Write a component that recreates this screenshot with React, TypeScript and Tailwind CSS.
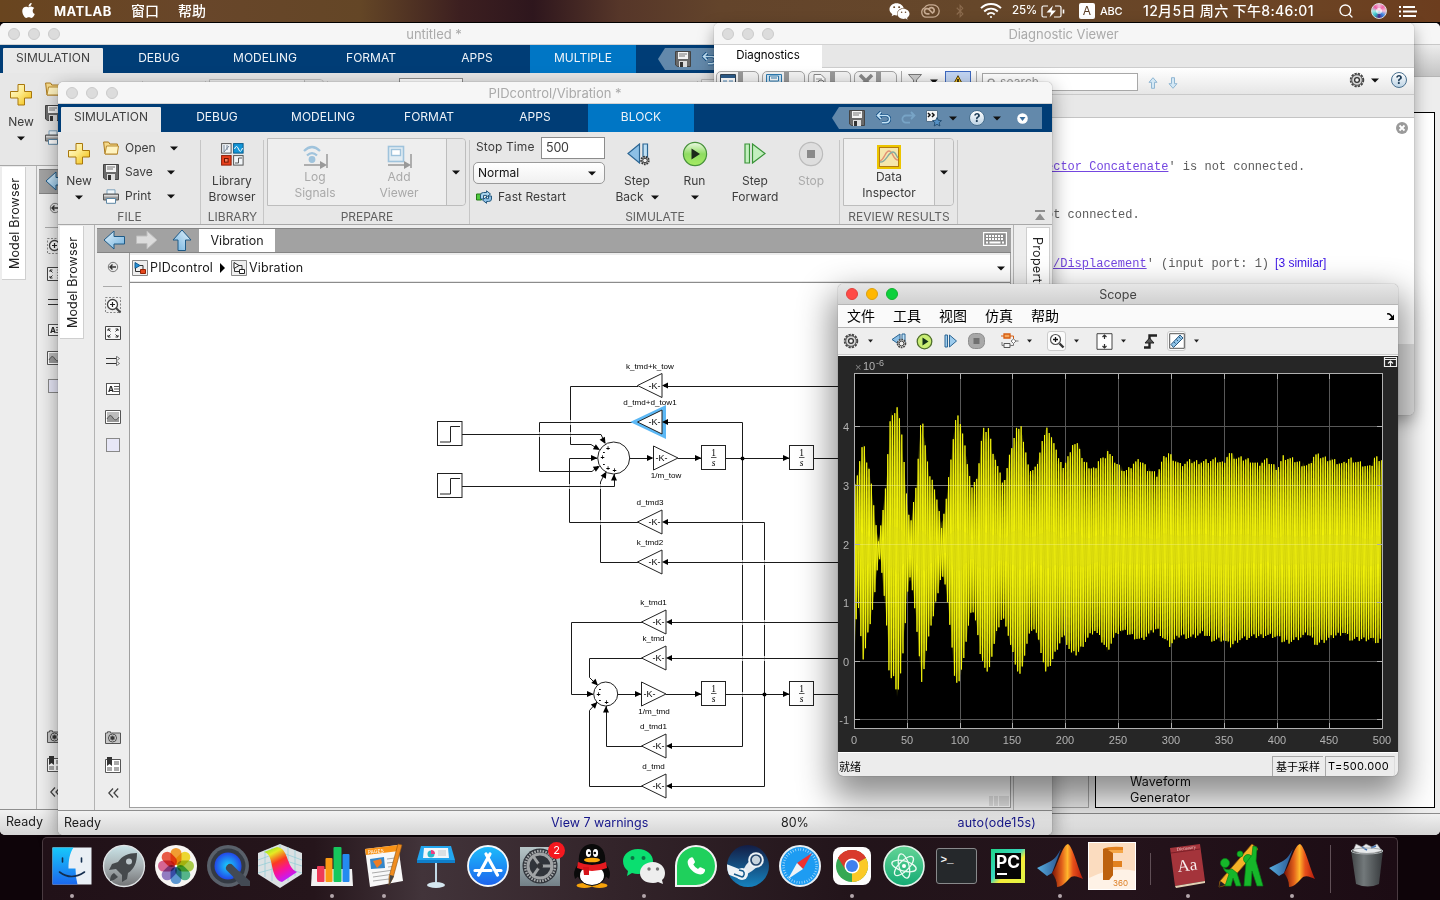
import React from "react";
import { FaApple, FaWeixin, FaBluetoothB, FaPhoneAlt } from "react-icons/fa";
import { Search } from "lucide-react";

type Kids = { children?: React.ReactNode };

/* ---------- shared bits ---------- */

const Caret = ({ className = "" }: { className?: string }) => (
  <svg className={"shrink-0 " + className} width="8" height="5" viewBox="0 0 8 5">
    <path d="M0 .4h8L4 4.6z" fill="#111" />
  </svg>
);

const TitleBar = ({ title, offset }: { title: string; offset: string }) => (
  <div className="flex h-[22px] shrink-0 items-center border-b border-[#d2d2d2] bg-[#f6f6f6]">
    <div className="flex w-[60px] shrink-0 gap-2 pl-2">
      <i className="h-3 w-3 shrink-0 rounded-full border border-[#cacaca] bg-[#dcdcdc]" />
      <i className="h-3 w-3 shrink-0 rounded-full border border-[#cacaca] bg-[#dcdcdc]" />
      <i className="h-3 w-3 shrink-0 rounded-full border border-[#cacaca] bg-[#dcdcdc]" />
    </div>
    <div className={"flex-1 pt-[2px] text-center text-[13px] tracking-[-0.05px] whitespace-nowrap text-[#aaa] " + offset}>{title}</div>
  </div>
);

const FloppyIcon = () => (
  <svg width="16" height="16" viewBox="0 0 16 16" className="shrink-0">
    <path d="M.5.5h15v15H2.5L.5 14z" fill="#6a6a6a" stroke="#444" />
    <path d="M3 1h10v7H3z" fill="#f4f4f4" />
    <path d="M4 3h8M4 5h6" stroke="#777" />
    <path d="M4 10h8v6H4z" fill="#ddd" />
    <path d="M5 11h3v5H5z" fill="#333" />
  </svg>
);

const FolderIcon = () => (
  <svg width="16" height="14" viewBox="0 0 16 14" className="shrink-0">
    <path d="M.6 1h5l1.200 2h7.600v10H2z" fill="#f5d98a" stroke="#a9781c" />
    <path d="M3.500 5h12l-1.200 8H2z" fill="#fff3c0" stroke="#b98b30" />
  </svg>
);

const PrinterIcon = () => (
  <svg width="16" height="15" viewBox="0 0 16 15" className="shrink-0">
    <path d="M4 .8h8V6H4z" fill="#eef6fb" stroke="#7fa3bd" />
    <path d="M.5 5h15v6H.5z" fill="#9a9a9a" stroke="#555" />
    <path d="M1 6h14v1.500H1z" fill="#d8d8d8" />
    <path d="M3.500 9.500h9v4.800h-9z" fill="#fff" stroke="#5c86a4" />
  </svg>
);

const HelpIcon = () => (
  <span className="flex h-4 w-4 shrink-0 items-center justify-center rounded-full border border-[#49708f] bg-linear-to-b from-white to-[#bdd3e4] text-[12px] leading-none font-bold text-[#1b3a55]">?</span>
);

const GearIcon = () => (
  <svg width="16" height="16" viewBox="0 0 16 16" className="shrink-0">
    <circle cx="8" cy="8" r="6.300" fill="none" stroke="#444" strokeWidth="1.900" strokeDasharray="2.300 1" />
    <circle cx="8" cy="8" r="5.300" fill="#d4d4d4" stroke="#555" />
    <circle cx="8" cy="8" r="2.400" fill="#f4f4f4" stroke="#333" strokeWidth="1.300" />
  </svg>
);

/* ---------- ribbon ---------- */

const Ribbon = ({ last, quick }: { last: string; quick: string }) => (
  <div className="flex h-7 shrink-0 bg-[#003d76] text-[12px] text-[#eef3f8]">
    <div className="mt-[3px] ml-[3px] flex h-[25px] w-[100px] shrink-0 items-center justify-center rounded-t-[1px] bg-[#e9e9e9] pb-[5px] text-[#404040]">SIMULATION</div>
    <div className="ml-[3px] flex shrink-0">
      {["DEBUG", "MODELING", "FORMAT", "APPS"].map((t) => (
        <div key={t} className="flex w-[106px] items-center justify-center pb-[2px]">{t}</div>
      ))}
      <div className="flex w-[106px] items-center justify-center bg-[#0076c5] pb-[2px]">{last}</div>
    </div>
    <div className={"mt-[3px] flex h-[22px] w-[210px] shrink-0 items-center bg-[#6389ab] pl-[17px] [clip-path:polygon(7px_0,100%_0,100%_100%,7px_100%,0_50%)] " + quick}>
      <FloppyIcon />
      <svg className="ml-[11px] shrink-0" width="15" height="14" viewBox="0 0 15 14">
        <path d="M5 1 1.500 4.500 5 8M2 4.500h8a3.400 3.400 0 0 1 0 7.200H6" fill="none" stroke="#0d4a80" strokeWidth="3.200" />
        <path d="M5 1 1.500 4.500 5 8M2 4.500h8a3.400 3.400 0 0 1 0 7.200H6" fill="none" stroke="#c3e2f6" strokeWidth="1.700" />
      </svg>
      <svg className="ml-[10px] shrink-0 opacity-60" width="15" height="14" viewBox="0 0 15 14">
        <path d="M10 1 13.500 4.500 10 8M13 4.500H5a3.400 3.400 0 0 0 0 7.200h4" fill="none" stroke="#86b6d9" strokeWidth="1.800" />
      </svg>
      <svg className="ml-[10px] shrink-0" width="16" height="17" viewBox="0 0 16 17">
        <path d="M.5.5h11v11H.5z" fill="#f4f6f8" stroke="#54718b" />
        <path d="m2 3 2 2-2 2M6 3l2 2-2 2" fill="none" stroke="#111" strokeWidth="1.500" />
        <path d="m11 7.500 1.300 2.800 3.200.3-2.400 2.100.8 3.300-2.900-1.700-2.800 1.700.7-3.300-2.400-2.100 3.200-.3z" fill="#5590c4" stroke="#1c4568" strokeWidth=".8" />
      </svg>
      <Caret className="ml-[7px]" />
      <span className="ml-3"><HelpIcon /></span>
      <Caret className="ml-2" />
      <svg className="ml-4 shrink-0" width="11" height="11" viewBox="0 0 11 11">
        <circle cx="5.500" cy="5.500" r="5.300" fill="#fff" />
        <path d="M2.500 4h6l-3 4z" fill="#3b6f9e" />
      </svg>
    </div>
  </div>
);

const Group = ({ label, width, children }: Kids & { label: string; width: string }) => (
  <div className={"relative flex h-[92px] shrink-0 flex-col " + width}>
    <div className="flex h-[77px]">{children}</div>
    <div className="flex h-[15px] items-center justify-center text-[12px] whitespace-nowrap text-[#606060]">{label}</div>
    <div className="absolute top-2 right-0 h-[84px] w-px bg-[#c6c6c6]" />
  </div>
);

const BigButton = ({ icon, lines, width, dim, caret }: { icon: React.ReactNode; lines: string[]; width: string; dim?: boolean; caret?: boolean }) => (
  <div className={"flex shrink-0 flex-col items-center pt-[9px] " + width + (dim ? " text-[#aaa]" : "")}>
    <div className="flex h-[26px] items-center justify-center">{icon}</div>
    <div className="mt-[6px] text-center leading-4 whitespace-nowrap">
      {lines.map((l, i) => (
        <div key={l} className="flex h-4 items-center justify-center gap-[7px]">
          {l}
          {caret && i === 1 ? <Caret /> : null}
        </div>
      ))}
    </div>
    {caret && lines.length === 1 ? <Caret className="mt-[6px]" /> : null}
  </div>
);

const BoxItem = ({ icon, lines, width, dim }: { icon: React.ReactNode; lines: string[]; width: string; dim?: boolean }) => (
  <div className={"flex shrink-0 flex-col items-center pt-[5px] " + width + (dim ? " text-[#a9a9a9]" : "")}>
    <div className="flex h-[25px] items-center">{icon}</div>
    {lines.map((l) => (
      <div key={l} className="h-4 leading-4">{l}</div>
    ))}
  </div>
);

const LogIcon = () => (
  <svg width="25" height="24" viewBox="0 0 25 24">
    <g fill="none" stroke="#9fc3dc" strokeWidth="2.200">
      <path d="M1 6q8-8 16 0M4 10.500q5-5 10 0" />
    </g>
    <circle cx="9" cy="14.500" r="3.400" fill="#9fc3dc" />
    <path d="M1 20h20M24 9v14" stroke="#999" strokeWidth="1.500" />
    <path d="m17 16 7 4-7 4z" fill="#999" />
  </svg>
);

const ViewerIcon = () => (
  <svg width="25" height="24" viewBox="0 0 25 24">
    <rect x="1.500" y="1.500" width="15" height="15" fill="#e3edf3" stroke="#9fc3dc" strokeWidth="1.600" />
    <rect x="4.500" y="4.500" width="9" height="6" fill="#fff" stroke="#9fc3dc" strokeWidth="1.400" />
    <path d="M1 20h20M24 9v14" stroke="#999" strokeWidth="1.500" />
    <path d="m17 16 7 4-7 4z" fill="#999" />
  </svg>
);

const StepBackIcon = () => (
  <svg width="24" height="24" viewBox="0 0 24 24" className="ml-[3px]">
    <path d="M12.500 2v19L1 11.500z" fill="#8dc0e6" stroke="#2b6593" strokeWidth="1.200" />
    <path d="M16 2h4.500v15H16z" fill="#bfe0f5" stroke="#2b6593" strokeWidth="1.200" />
    <circle cx="18" cy="18.500" r="3.800" fill="#ddd" stroke="#333" strokeWidth="1.800" strokeDasharray="1.700 .9" />
    <circle cx="18" cy="18.500" r="2.300" fill="#eee" stroke="#333" />
  </svg>
);

const PlusIcon = () => (
  <svg width="24" height="24" viewBox="0 0 24 24">
    <defs>
      <linearGradient id="plusFill" x1="0" y1="0" x2="1" y2="1">
        <stop offset="0" stopColor="#fffbe0" />
        <stop offset=".45" stopColor="#fdea8a" />
        <stop offset="1" stopColor="#efb800" />
      </linearGradient>
    </defs>
    <path d="M9 1.500h6.500v7H22.500V15h-7v7H9v-7H1.500V8.500H9z" fill="url(#plusFill)" stroke="#a8770c" />
  </svg>
);

const Toolstrip = ({ compact }: { compact?: boolean }) => (
  <div className="flex h-[93px] shrink-0 border-b border-[#a8a8a8] bg-[#e7e7e7] text-[12px] text-[#3c3c3c]">
    <Group label="FILE" width="w-[143px]">
      <BigButton icon={<PlusIcon />} lines={["New"]} width="w-[42px]" caret />
      <div className="flex flex-col pt-1 pl-[3px]">
        {[
          ["Open", <FolderIcon key="a" />, "ml-[15px]"],
          ["Save", <FloppyIcon key="b" />, "ml-3"],
          ["Print", <PrinterIcon key="c" />, "ml-3"],
        ].map(([t, icon, gap]) => (
          <div key={t as string} className="flex h-6 items-center">
            {icon}
            <span className="w-9 pl-[6px]">{t}</span>
            <Caret className={"mt-px " + (gap as string)} />
          </div>
        ))}
      </div>
    </Group>
    <Group label="LIBRARY" width="w-[63px]">
      <BigButton
        width="w-[62px]"
        lines={["Library", "Browser"]}
        icon={
          <svg width="23" height="23" viewBox="0 0 23 23">
            <rect x=".6" y=".6" width="9.500" height="9.500" fill="#f1f5f8" stroke="#555" />
            <path d="M3 2v7l5-6M6 2v5" stroke="#78889a" fill="none" />
            <rect x="12.600" y=".6" width="9.500" height="9.500" fill="#1296d8" stroke="#0a5c8c" />
            <path d="M13.500 6q2-5 4 0t4-1" stroke="#fff" fill="none" />
            <rect x=".6" y="12.600" width="9.500" height="9.500" fill="#e8401c" stroke="#8e1d06" />
            <rect x="3.500" y="15.500" width="3.600" height="3.600" fill="#f87c5b" stroke="#6e1400" />
            <rect x="12.600" y="12.600" width="9.500" height="9.500" fill="#f1f5f8" stroke="#555" />
            <path d="M14 20h3.500v-5H21" stroke="#555" fill="none" />
          </svg>
        }
      />
    </Group>
    <Group label="PREPARE" width={compact ? "w-[122px]" : "w-[206px]"}>
      <div className="mt-[6px] ml-[3px] flex h-[68px] rounded-r-[4px] border border-[#bdbdbd] bg-[#eeeeee]">
        <BoxItem icon={<LogIcon />} lines={["Log", "Signals"]} width="w-[94px]" dim />
        {!compact && <BoxItem icon={<ViewerIcon />} lines={["Add", "Viewer"]} width="w-[84px] pr-[10px]" dim />}
        <div className="flex w-[19px] items-center justify-center rounded-r-[4px] border-l border-[#bdbdbd] bg-[#e7e7e7]"><Caret /></div>
      </div>
    </Group>
    <Group label="SIMULATE" width="w-[370px]">
      <div className="flex w-[135px] flex-col pt-[5px] pl-[3px]">
        <div className="flex h-[22px] items-center">
          <span className="w-[68px] pb-[3px] pl-[3px] tracking-[0.1px]">Stop Time</span>
          <span className="flex h-[22px] w-16 items-center border border-[#8c8c8c] bg-white pt-px pl-1 text-[12.500px] tracking-[-.2px]">500</span>
        </div>
        <div className="mt-[3px] flex h-[22px] w-[132px] items-center justify-between rounded-[5px] border border-[#9a9a9a] bg-linear-to-b from-white to-[#f0f0f0] pr-2 pl-1 text-[12px] text-[#111]">Normal<Caret /></div>
        <div className="mt-[2px] flex h-[22px] items-center pl-[3px]">
          <svg width="16" height="14" viewBox="0 0 16 14">
            <path d="M.5 4h5v6h-5z" fill="#4fc93f" stroke="#237a17" />
            <path d="M4.500 9V5q0-2.500 3-2.500h3V.8L14.500 4l-4 3V5.400h-3V9z" fill="#a9d4ee" stroke="#25597e" />
            <path d="M15.500 6v3q0 2.500-3 2.500h-2v1.800L6.500 10l4-3v1.700h2V6z" fill="#8dc0e6" stroke="#25597e" />
          </svg>
          <span className="pl-[6px] tracking-[0.05px]">Fast Restart</span>
        </div>
      </div>
      <BigButton width="w-[64px]" lines={["Step", "Back"]} icon={<StepBackIcon />} caret />
      <BigButton
        width="w-[51px]"
        lines={["Run"]}
        caret
        icon={
          <svg width="26" height="26" viewBox="0 0 26 26">
            <defs>
              <linearGradient id="runFill" x1="0" y1="0" x2="0" y2="1">
                <stop offset="0" stopColor="#eefae6" />
                <stop offset=".5" stopColor="#8fdc62" />
                <stop offset="1" stopColor="#a6ec62" />
              </linearGradient>
            </defs>
            <circle cx="13" cy="13" r="11.600" fill="url(#runFill)" stroke="#47913a" strokeWidth="1.200" />
            <path d="m9.500 7.500 8.500 5.500-8.500 5.500z" fill="#1c2a1a" />
          </svg>
        }
      />
      <BigButton
        width="w-[70px]"
        lines={["Step", "Forward"]}
        icon={
          <svg width="24" height="24" viewBox="0 0 24 24">
            <path d="M2 2h4.500v19H2zM9.500 2v19L22 11.500z" fill="#c3efbf" stroke="#3a9438" strokeWidth="1.200" />
          </svg>
        }
      />
      <BigButton
        width="w-[42px]"
        lines={["Stop"]}
        dim
        icon={
          <svg width="26" height="26" viewBox="0 0 26 26">
            <circle cx="13" cy="13" r="11.600" fill="#dedede" stroke="#bbb" strokeWidth="1.200" />
            <path d="M9 9h8v8H9z" fill="#8a8a8a" />
          </svg>
        }
      />
    </Group>
    <Group label="REVIEW RESULTS" width="w-[118px]">
      <div className="mt-[6px] ml-[3px] flex h-[68px] rounded-r-[4px] border border-[#bdbdbd] bg-[#f0f0f0]">
        <BoxItem
          width="w-[90px]"
          lines={["Data", "Inspector"]}
          icon={
            <svg width="24" height="24" viewBox="0 0 24 24">
              <rect x="1" y="1" width="22" height="22" fill="#f6e7ac" stroke="#ecc500" strokeWidth="2" />
              <rect x="2.500" y="2.500" width="19" height="19" fill="none" stroke="#b47b12" />
              <path d="M3 16C8 14 8 6 12 6s4 9 9 9" fill="none" stroke="#e29274" strokeWidth="1.400" />
              <path d="M3 17c6 1 8-10 13-10 3 0 3 4 5 6" fill="none" stroke="#88aba0" strokeWidth="1.400" />
            </svg>
          }
        />
        <div className="flex w-[19px] items-center justify-center rounded-r-[4px] border-l border-[#bdbdbd] bg-[#e7e7e7]"><Caret /></div>
      </div>
    </Group>
    <div className="flex flex-1 items-end justify-end pr-[7px] pb-1">
      <svg width="10" height="10" viewBox="0 0 10 10"><path d="M0 0h10v2H0zM5 3.500 10 10H0z" fill="#8e8e8e" /></svg>
    </div>
  </div>
);

/* ---------- tool palette beside the canvas ---------- */

const Cell = ({ children }: Kids) => <div className="flex h-7 w-full shrink-0 items-center justify-center pl-[2px]">{children}</div>;

const Palette = () => (
  <div className="flex w-[34px] shrink-0 flex-col items-center pb-[3px]">
    <Cell>
      <svg width="12" height="12" viewBox="0 0 12 12"><circle cx="6" cy="6" r="4.700" fill="#e8e8e8" stroke="#777" /><path d="M5.500 3.500 3 6l2.500 2.500M3 6h6" fill="none" stroke="#333" strokeWidth="1.400" /></svg>
    </Cell>
    <div className="flex h-[10px] items-center"><i className="h-px w-[19px] bg-[#aaa]" /></div>
    <Cell>
      <svg width="18" height="18" viewBox="0 0 18 18"><path d="M1.500 1.500h15v15h-15z" fill="none" stroke="#888" strokeDasharray="2 1.500" /><circle cx="8.500" cy="8.500" r="5" fill="#fff" stroke="#444" strokeWidth="1.300" /><path d="M6 8.500h5M8.500 6v5" stroke="#222" strokeWidth="1.200" /><path d="m12 12 4.500 4.500" stroke="#444" strokeWidth="2" /></svg>
    </Cell>
    <Cell>
      <svg width="16" height="14" viewBox="0 0 16 14" className="overflow-visible"><path d="M.5.5h15v13H.5z" fill="#f8f8f8" stroke="#444" /><path d="M3 5V3h2.500M3 3l2.500 2.500M13 5V3h-2.500M13 3l-2.500 2.500M3 9v2h2.500M3 11l2.500-2.500M13 9v2h-2.500M13 11l-2.500-2.500" fill="none" stroke="#333" /></svg>
    </Cell>
    <Cell>
      <svg width="14" height="10" viewBox="0 0 14 10"><path d="M0 2.500h11M0 7.500h11" stroke="#333" strokeWidth="1.100" /><path d="m10.500.300 3 2.200-3 2.200zM10.500 5.300l3 2.200-3 2.200z" fill="#fff" stroke="#555" strokeWidth=".8" /></svg>
    </Cell>
    <Cell>
      <span className="flex h-3 w-[14px] items-center border border-[#555] bg-white text-[8px] leading-none font-bold text-[#222]">
        <span className="pl-px">A</span>
        <svg width="5" height="8" viewBox="0 0 5 8"><path d="M0 1.500h5M0 4h5M0 6.500h5" stroke="#555" /></svg>
      </span>
    </Cell>
    <Cell>
      <svg width="16" height="14" viewBox="0 0 16 14"><path d="M.5.5h15v13H.5z" fill="#fff" stroke="#555" /><path d="M2 2h12v10H2z" fill="#bdbdbd" /><path d="M2 9c3-5 4-4 6-1s4 2 6-1v5H2z" fill="#999" /><path d="M2 9c3-5 4-4 6-1s4 2 6-1" fill="none" stroke="#555" /></svg>
    </Cell>
    <Cell><i className="h-[14px] w-[14px] border border-[#888] bg-[#e7e7f7]" /></Cell>
    <div className="flex-1" />
    <Cell>
      <svg width="16" height="13" viewBox="0 0 16 13"><path d="M.5 2h2V.8h3V2h10v10.500H.5z" fill="#c4c4c4" stroke="#555" /><circle cx="7.500" cy="7" r="4" fill="#ddd" stroke="#444" /><circle cx="7.500" cy="7" r="2.200" fill="#333" stroke="#777" /></svg>
    </Cell>
    <Cell>
      <svg width="16" height="16" viewBox="0 0 16 16"><path d="M.5 2.500h15v13H.5z" fill="#fff" stroke="#555" /><path d="M9 4h5v4H9zM9 10h5v4H9zM2 10h5v4H2z" fill="#aaa" /><path d="M2 0h5v9L4.500 7 2 9z" fill="#333" /></svg>
    </Cell>
    <Cell>
      <svg width="11" height="10" viewBox="0 0 11 10"><path d="M5 .5.8 5 5 9.500M10.200.5 6 5l4.200 4.500" fill="none" stroke="#444" strokeWidth="1.300" /></svg>
    </Cell>
  </div>
);

/* ---------- block diagram ---------- */

const GainLeft = ({ x, y, label, lx, sel }: { x: number; y: number; label: string; lx: number; sel?: boolean }) => (
  <g>
    {sel && <path d={`M${x + 1.5} ${y - 13}v26L${x - 26} ${y}z`} fill="none" stroke="#5cb8f5" strokeWidth="5" />}
    <path d={`M${x} ${y - 12}v24L${x - 24.500} ${y}z`} fill="#fff" stroke="#222" />
    <text x={x - 7.500} y={y + 3.300} fontSize="9" textAnchor="middle">-K-</text>
    <path d={`M${x} ${y}l6-3v6z`} fill="#000" />
    <text x={lx} y={y - 17} fontSize="8.100" textAnchor="middle">{label}</text>
  </g>
);

const GainRight = ({ x, y, label }: { x: number; y: number; label: string }) => (
  <g>
    <path d={`M${x} ${y - 12}v24L${x + 24.500} ${y}z`} fill="#fff" stroke="#222" />
    <text x={x + 8} y={y + 3.300} fontSize="9" textAnchor="middle">-K-</text>
    <text x={x + 12.500} y={y + 20} fontSize="8.100" textAnchor="middle">{label}</text>
  </g>
);

const Integrator = ({ x, y }: { x: number; y: number }) => (
  <g>
    <rect x={x} y={y} width="24" height="24" fill="#fff" stroke="#222" />
    <g fontFamily="'Liberation Serif', serif" fontSize="9.500" textAnchor="middle">
      <text x={x + 12} y={y + 10}>1</text>
      <text x={x + 12} y={y + 20} fontStyle="italic">s</text>
    </g>
    <path d={`M${x + 9.500} ${y + 12}h5.500`} stroke="#333" strokeWidth=".8" />
  </g>
);

const Head = ({ x, y, a = 0 }: { x: number; y: number; a?: number }) => (
  <path d="M0 0-6.500-3V3z" transform={`translate(${x} ${y}) rotate(${a})`} fill="#000" />
);

/* points where one signal line passes over another and leaves a small gap */
const crossings: [number, number][] = [[570.5, 422.5], [570.5, 434.5], [539.5, 434.5], [569.5, 486.5], [600.5, 486.5], [600.5, 522.5], [742.5, 522.5], [742.5, 562.5], [764.5, 562.5], [742.5, 622.5], [764.5, 622.5], [742.5, 658.5], [764.5, 658.5], [742.5, 694.5]];

const Diagram = () => (
  <svg className="block" width="880" height="524" viewBox="130 283 880 524" fontFamily="'Liberation Sans', Arial, sans-serif">
    <g fill="none" stroke="#1a1a1a" strokeWidth="1">
      <path d="M840 386.500H664M638 386.500H570.500V444.500H591L598 449" />
      <path d="M638 422.500H539.500V471.500H592L598 466" />
      <path d="M462 434.500H601L605 443M462 486.500H614.500V474" />
      <path d="M638 522.500H569.500V458.500H597M638 562.500H600.500V482L605 473" />
      <path d="M630 458.500H652M678 458.500H701M726 458.500H789M814 458.500H840" />
      <path d="M664 422.500H742.500V746.500H668M664 522.500H764.500V786.500H668M664 562.500H840" />
      <path d="M840 622.500H668M642 622.500H571.500V694.500H593M840 658.500H668M642 658.500H589.500V677.500L597 685" />
      <path d="M618 694.500H641M666 694.500H701M726 694.500H789M814 694.500H840" />
      <path d="M642 746.500H606.500V706M642 786.500H589.500V710.500L597 702" />
    </g>
    <g stroke="#fff" strokeWidth="2" opacity=".7">
      {crossings.map(([x, y]) => <path key={`${x}-${y}`} d={`M${x} ${y - 2.5}v2M${x} ${y + 0.5}v2`} />)}
    </g>
    <GainLeft x={662} y={385.500} label="k_tmd+k_tow" lx={650} />
    <GainLeft x={662} y={422} label="d_tmd+d_tow1" lx={650} sel />
    <GainLeft x={662} y={522} label="d_tmd3" lx={650} />
    <GainLeft x={662} y={562} label="k_tmd2" lx={650} />
    <GainLeft x={666} y={622} label="k_tmd1" lx={653.500} />
    <GainLeft x={666} y={658} label="k_tmd" lx={653.500} />
    <GainLeft x={666} y={746} label="d_tmd1" lx={653.500} />
    <GainLeft x={666} y={786} label="d_tmd" lx={653.500} />
    <GainRight x={653.500} y={458} label="1/m_tow" />
    <GainRight x={641.500} y={694} label="1/m_tmd" />
    <Integrator x={701.500} y={445.500} />
    <Integrator x={789.500} y={445.500} />
    <Integrator x={701.500} y={681.500} />
    <Integrator x={789.500} y={681.500} />
    {[421.500, 473.500].map((y) => (
      <g key={y} fill="none" stroke="#222">
        <rect x="437.500" y={y} width="24.500" height="24" fill="#fff" />
        <path d={`M440 ${y + 20.500}h10.500v-15.500h9.500`} />
      </g>
    ))}
    <circle cx="613.700" cy="458" r="16" fill="#fff" stroke="#222" />
    <circle cx="605.700" cy="694" r="12" fill="#fff" stroke="#222" />
    <g fontSize="7" fontWeight="bold" textAnchor="middle">
      <text x="608" y="450.500">+</text>
      <text x="604" y="454">-</text>
      <text x="602.500" y="460">+</text>
      <text x="604" y="466">-</text>
      <text x="608" y="470.500">+</text>
      <text x="614.500" y="473">+</text>
      <text x="600" y="690.500">-</text>
      <text x="598.500" y="696.500">+</text>
      <text x="600" y="702">-</text>
      <text x="606.500" y="705">+</text>
    </g>
    <Head x={605.500} y={444} a={60} />
    <Head x={600} y={450} a={30} />
    <Head x={597.500} y={458} />
    <Head x={600} y={466} a={-30} />
    <Head x={606.500} y={471.500} a={-60} />
    <Head x={614} y={474} a={-90} />
    <Head x={653.500} y={458} />
    <Head x={701.500} y={458} />
    <Head x={789.500} y={458} />
    <Head x={598} y={685.500} a={45} />
    <Head x={593.500} y={694} />
    <Head x={597.500} y={702} a={-45} />
    <Head x={606} y={706} a={-90} />
    <Head x={641.500} y={694} />
    <Head x={701.500} y={694} />
    <Head x={789.500} y={694} />
    <circle cx="742.500" cy="458.500" r="2" />
    <circle cx="764.500" cy="694.500" r="2" />
    <path d="M989 796h4v10h-4zM994 796h4v10h-4zM999 796h10v10h-10z" fill="#e4e4e4" />
  </svg>
);

/* ---------- Simulink editor window ---------- */

const ArrowShape = ({ rot, dim }: { rot: string; dim?: boolean }) => (
  <svg width="22" height="22" viewBox="0 0 22 22" className={"shrink-0 " + rot}>
    <defs>
      <linearGradient id="arrowBlue" x1="0" y1="0" x2="1" y2="1">
        <stop offset="0" stopColor="#e4f3fc" />
        <stop offset="1" stopColor="#6fb0dd" />
      </linearGradient>
    </defs>
    <path d="M1 11 11 2v5.500h10.500v7.500H11V20z" fill={dim ? "#dcdcdc" : "url(#arrowBlue)"} stroke={dim ? "#bdbdbd" : "#1f5a86"} />
  </svg>
);

type SimProps = Kids & { title: string; last: string; quick: string; compact?: boolean; place: string; status: React.ReactNode; statusH: string; offset: string };

const SimWindow = ({ title, last, quick, compact, place, status, statusH, offset, children }: SimProps) => (
  <div className={"absolute flex flex-col overflow-hidden rounded-[5px] bg-[#ededed] " + place}>
    <TitleBar title={title} offset={offset} />
    <Ribbon last={last} quick={quick} />
    <Toolstrip compact={compact} />
    <div className="flex min-h-0 flex-1">
      <div className="w-[37px] shrink-0 border-r border-[#b3b3b3] pt-px pl-[2px]">
        <div className="flex h-[113px] w-[24px] items-center justify-center border-r border-b border-[#cfcfcf] bg-white">
          <span className="rotate-180 pr-[3px] text-[12.500px] leading-none tracking-[.15px] whitespace-nowrap text-[#222] [writing-mode:vertical-rl]">Model Browser</span>
        </div>
      </div>
      <div className="flex min-w-0 flex-1 flex-col pt-[3px]">
        <div className="ml-[2px] flex h-[25px] shrink-0 items-center border-t border-b border-[#848484] bg-[#a2a2a2] pl-[6px]">
          <ArrowShape rot="-mt-[2px]" />
          <span className="ml-[11px]"><ArrowShape rot="-mt-[2px] rotate-180" dim /></span>
          <span className="ml-[13px]"><ArrowShape rot="-mt-[2px] rotate-90" /></span>
          <div className="ml-[6px] flex h-[23px] w-[76px] items-center justify-center bg-white pt-px text-[12.500px] text-[#1a1a1a]">Vibration</div>
          <svg className="mr-1 mb-[3px] ml-auto" width="24" height="14" viewBox="0 0 24 14">
            <path d="M.6.6h22.800v12.800H.6z" fill="#8d8d8d" stroke="#fff" strokeWidth="1.200" />
            <path d="M3 4h18M3 7h18" stroke="#fff" strokeWidth="1.800" strokeDasharray="2 1" />
            <path d="M3 10.500h2M6.500 10.500h11M19 10.500h2" stroke="#fff" strokeWidth="1.800" />
          </svg>
        </div>
        <div className="flex min-h-0 flex-1">
          <Palette />
          {children}
        </div>
      </div>
      <div className="ml-[2px] w-[39px] shrink-0 border-l border-[#b3b3b3] pt-[2px] pl-3">
        <div className="h-[112px] w-[24px] border border-[#cfcfcf] bg-white pt-[9px] pl-[3px]">
          <span className="text-[12.500px] leading-none tracking-[.3px] whitespace-nowrap text-[#222] [writing-mode:vertical-rl]">Property Inspector</span>
        </div>
      </div>
    </div>
    <div className={"flex shrink-0 items-center border-t border-[#8e8e8e] bg-linear-to-b from-[#f2f2f2] to-[#d5d5d5] text-[12.500px] text-[#1c1c1c] " + statusH}>{status}</div>
  </div>
);

const BlockChip = ({ color }: { color?: boolean }) => (
  <svg width="16" height="16" viewBox="0 0 16 16" className="shrink-0">
    <path d="M.5.5h15v15H.5z" fill="#eee" stroke="#888" />
    <path d="M3 2.500v6l5-3z" fill={color ? "#2390d8" : "#fff"} stroke={color ? "#125a8e" : "#222"} />
    <path d="M8 5.500h3V9M3.500 8v3.500H8" fill="none" stroke="#333" />
    <path d="M8.500 9.500h5v4h-5z" fill={color ? "#e5481e" : "#fff"} stroke={color ? "#952205" : "#222"} />
  </svg>
);

/* ---------- diagnostic viewer ---------- */

const SplitButton = ({ children }: Kids) => (
  <div className="mr-[3px] flex h-[26px] w-[43px] shrink-0 justify-between overflow-hidden rounded-[5px] border border-[#a3a3a3] bg-[#f3f3f3]">
    <div className="flex flex-1 justify-center pt-[2px]">{children}</div>
    <div className="w-[5px] bg-[#9a9a9a]" />
    <div className="w-[15px]" />
  </div>
);

const DiagnosticViewer = () => (
  <div className="absolute top-[23px] left-[714px] flex h-[392px] w-[700px] flex-col overflow-hidden rounded-[5px] bg-white shadow-[0_0_1px_rgba(0,0,0,.5),0_6px_16px_rgba(0,0,0,.35)]">
    <TitleBar title="Diagnostic Viewer" offset="pr-[61px]" />
    <div className="flex h-[23px] shrink-0 border-b border-[#cdcdcd] bg-[#e7e7e7]">
      <div className="flex h-[23px] w-[108px] items-center justify-center bg-white pb-px text-[11.500px] text-black">Diagnostics</div>
    </div>
    <div className="flex h-[27px] shrink-0 border-b border-[#c9c9c9] bg-linear-to-b from-white to-[#e6e6e6] pt-[3px] pl-[2px]">
      <SplitButton><svg width="16" height="14" viewBox="0 0 16 14"><path d="M.5.500h15v13H.5z" fill="#fff" stroke="#345" /><path d="M1 1h14v3H1z" fill="#2c5c8a" /><path d="M3 7h4M9 7h4M3 10h4" stroke="#4a86b8" /></svg></SplitButton>
      <SplitButton><svg width="16" height="14" viewBox="0 0 16 14"><path d="M.5.500h15v13H.5z" fill="#cfe7f7" stroke="#2e7ab0" /><path d="M3.500 2h9v5h-9zM5 4h6" fill="#fff" stroke="#2e7ab0" /></svg></SplitButton>
      <SplitButton><svg width="14" height="16" viewBox="0 0 14 16"><path d="M1 .5h7l4 4v11H1z" fill="#fff" stroke="#888" /><path d="M3 5h6M3 8h4" stroke="#999" /><circle cx="8" cy="9" r="3" fill="#eee" stroke="#777" /></svg></SplitButton>
      <SplitButton><svg width="16" height="14" viewBox="0 0 16 14"><path d="m2 1 12 12M14 1 2 13" stroke="#888" strokeWidth="3.500" /></svg></SplitButton>
      <i className="mr-[6px] ml-px h-5 w-px bg-[#aaa]" />
      <svg className="mt-[3px]" width="14" height="14" viewBox="0 0 14 14"><path d="M.5.5h13L8.500 6v7L5.500 11V6z" fill="#ccc" stroke="#777" /></svg>
      <Caret className="mt-[8px] ml-[8px]" />
      <div className="ml-[7px] flex h-[26px] w-[26px] justify-center border border-[#3e69c0] bg-[#c3d6f4] pt-[3px]">
        <svg width="14" height="13" viewBox="0 0 14 13"><path d="m7 .7 6.300 11.800H.7z" fill="#f5c52b" stroke="#5a4200" /><path d="M7 4v4M7 9.500v1.500" stroke="#000" strokeWidth="1.400" /></svg>
      </div>
      <i className="ml-[5px] h-5 w-px bg-[#aaa]" />
      <div className="mt-[2px] ml-[5px] flex h-[18px] w-[156px] shrink-0 items-center border border-[#a8a8a8] bg-white pl-1 text-[12px] text-[#999]">
        <Search size={9} strokeWidth={3.5} color="#999" />
        <span className="pl-1 tracking-[.1px]">search</span>
      </div>
      <svg className="mt-[6px] ml-[10px] shrink-0" width="10" height="12" viewBox="0 0 10 12"><path d="m5 .7 4 4.600H6.500v6h-3v-6H1z" fill="#d4e8f5" stroke="#8fb6d2" /></svg>
      <svg className="mt-[6px] ml-[10px] shrink-0" width="10" height="12" viewBox="0 0 10 12"><path d="m5 11.300 4-4.600H6.500v-6h-3v6H1z" fill="#d4e8f5" stroke="#8fb6d2" /></svg>
      <div className="mt-px mr-[7px] ml-auto flex h-4 items-center">
        <GearIcon />
        <Caret className="mr-3 ml-[6px]" />
        <HelpIcon />
      </div>
    </div>
    <div className="h-[23px] shrink-0 border-b border-[#c4c4c4] bg-[#e8e8e8]" />
    <div className="flex h-[226px] shrink-0 flex-col pl-[332px] font-['Liberation_Mono',monospace] text-[12px] leading-[14px] whitespace-nowrap text-[#5c5c5c]">
      <div className="flex justify-end pt-1 pr-[6px]">
        <svg width="12" height="12" viewBox="0 0 12 12"><circle cx="6" cy="6" r="6" fill="#9a9a9a" /><path d="m3.500 3.500 5 5M8.500 3.500l-5 5" stroke="#fff" strokeWidth="1.800" /></svg>
      </div>
      <div className="mt-[26px]"><span className="text-[#7446e0] underline">ector Concatenate</span>' is not connected.</div>
      <div className="mt-[34px]">ot connected.</div>
      <div className="mt-[34px] pl-[7px]">
        <span className="text-[#7446e0] underline">/Displacement</span>' (input port: 1)
        <span className="ml-[6px] font-['Liberation_Sans',sans-serif] text-[12px] text-[#3a12e6]">[3 similar]</span>
      </div>
    </div>
    <div className="flex-1 bg-[#e4e4e4]" />
  </div>
);

/* ---------- scope ---------- */

const upper = [62,275,80,160,87,118,93,180,100,205,111,295,118,370,124,430,131,380,145,240,150,135,156,30,163,50,169,35,174,25,181,62,187,130,197,295,207,375,220,265,226,185,232,80,237,62,243,115,256,230,268,260,275,300,287,378,300,290,313,150,325,45,335,68,343,112,355,200,366,270,380,220,393,85,398,100,406,78,418,150,430,195,442,243,450,238,465,150,480,85,491,73,500,150,517,218,530,205,545,130,555,80,560,80,566,115,577,125,590,190,600,200,610,180,622,132,641,137,650,185,670,205,680,208,692,175,705,180,713,150,722,170,740,195,755,210,765,212,780,190,800,182,815,205,840,225,855,180,870,160,885,178,900,195,925,185,960,185,990,180,1010,190,1025,160,1045,175,1080,180,1100,195,1120,180,1150,205,1165,172,1190,180,1230,200,1245,165,1290,180,1320,195,1335,175,1390,205,1400,172,1419,178];
const lower = [62,783,70,595,78,680,84,783,91,750,98,700,108,640,118,560,124,460,131,490,140,600,147,690,153,850,160,830,166,840,172,880,178,860,184,800,190,720,200,570,207,530,215,590,223,690,235,845,243,800,255,690,265,655,275,590,287,520,300,580,310,700,322,845,334,845,345,760,360,650,370,628,385,750,403,825,415,775,430,690,440,660,450,660,465,740,485,824,492,824,502,750,517,685,527,685,540,740,555,820,570,785,585,740,600,705,620,760,635,762,655,725,680,690,700,725,713,750,730,712,745,690,765,700,800,720,840,685,855,710,873,735,900,705,925,712,960,700,985,720,1010,718,1030,738,1050,718,1080,712,1120,705,1150,710,1165,725,1190,722,1230,700,1250,733,1290,712,1320,695,1340,720,1390,715,1410,728,1419,710];

const SX = 610 / 1568;
const sample = (table: number[], px: number) => {
  const u = (px - 830) / SX;
  for (let i = 2; i < table.length; i += 2) {
    if (u <= table[i]) {
      const f = Math.max(0, (u - table[i - 2]) / (table[i] - table[i - 2]));
      return (table[i - 1] + (table[i + 1] - table[i - 1]) * f) / 3 + 400;
    }
  }
  return table[table.length - 1] / 3 + 400;
};

const wave = (() => {
  let d = "M854.5 661";
  let up = true;
  let n = 0;
  for (let x = 855; x < 1382; x += 1.17) {
    const jitter = (((n * 37) % 11) - 5) * 0.5;
    const y = sample(up ? upper : lower, x) + jitter;
    d += `L${x.toFixed(2)} ${y.toFixed(1)}`;
    up = !up;
    n++;
  }
  return d;
})();

const envelope = (squeeze: number) => {
  const top: string[] = [];
  const bottom: string[] = [];
  for (let x = 855; x < 1382; x += 2) {
    const a = sample(upper, x);
    const b = sample(lower, x);
    const mid = (a + b) / 2;
    const wob = squeeze * (1 + (((x * 13) % 7) - 3) * 0.02);
    top.push(`${x} ${(mid + (a - mid) * wob).toFixed(1)}`);
    bottom.unshift(`${x} ${(mid + (b - mid) * wob).toFixed(1)}`);
  }
  return "M" + top.concat(bottom).join("L") + "z";
};

const layers = [0.97, 0.94, 0.86, 0.78, 0.7, 0.62, 0.54, 0.46, 0.38, 0.3, 0.22, 0.14];

const ticksX = [0, 50, 100, 150, 200, 250, 300, 350, 400, 450, 500];
const ticksY = [4, 3, 2, 1, 0, -1];
const py = (v: number) => Math.floor(661.3 - v * 58.65) + 0.5;
const px = (v: number) => Math.round(854 + v * 1.0565) + 0.5;

const ScopePlot = () => (
  <svg className="block" width="560" height="396" viewBox="838 356 560 396" fontFamily="'Liberation Sans', Arial, sans-serif">
    <rect x="838" y="356" width="560" height="396" fill="#262626" />
    <rect x="854.500" y="374" width="528" height="354.500" fill="#000" />
    <g stroke="#585858" strokeWidth="1">
      {ticksX.slice(1, -1).map((v) => <path key={v} d={`M${px(v)} 374V728`} />)}
      {ticksY.map((v) => <path key={v} d={`M855 ${py(v)}H1382`} />)}
    </g>
    {layers.map((s) => <path key={s} d={envelope(s)} fill="#d0d00c" opacity=".14" />)}
    <path d={wave} fill="none" stroke="#ffff0c" strokeWidth=".85" strokeLinejoin="bevel" />
    <path d={envelope(0.16)} fill="#d6d610" opacity=".35" />
    <g stroke="#fff" opacity=".2">
      {ticksY.slice(1, 4).map((v) => <path key={v} d={`M855 ${py(v)}H1382`} />)}
    </g>
    <g stroke="#b0b0b0" fill="none">
      <rect x="854.500" y="373.500" width="528" height="355" />
      {ticksX.map((v) => <path key={v} d={`M${px(v)} 374v5M${px(v)} 728v-5`} />)}
      {ticksY.map((v) => <path key={v} d={`M855 ${py(v)}h5M1382 ${py(v)}h-5`} />)}
    </g>
    <g fill="#b2b2b2" fontSize="11">
      {ticksX.map((v) => <text key={v} x={px(v) - 0.5} y="744" textAnchor="middle">{v}</text>)}
      {ticksY.map((v) => <text key={v} x="849" y={py(v) + 4} textAnchor="end">{v}</text>)}
      <text x="855" y="370.500" fill="#858585">×</text>
      <text x="863" y="370">10</text>
      <text x="876" y="365.500" fontSize="9">-6</text>
    </g>
    <g stroke="#eee" fill="none" strokeWidth="1.200">
      <path d="M1384.500 357.500h12v9h-12zM1384.500 359.500h12M1390.500 366v-5M1388 363.500l2.500-2.500 2.500 2.500" />
    </g>
  </svg>
);

const SmallCaret = ({ className = "" }: { className?: string }) => (
  <svg className={"shrink-0 " + className} width="5" height="4" viewBox="0 0 5 4"><path d="M0 .5h5L2.500 3.500z" fill="#222" /></svg>
);

const Scope = () => (
  <div className="absolute top-[284px] left-[838px] flex h-[492px] w-[560px] flex-col overflow-hidden rounded-[5px] bg-[#ececec] shadow-[0_0_1px_rgba(0,0,0,.6),0_16px_34px_6px_rgba(0,0,0,.45)]">
    <div className="flex h-[21px] shrink-0 items-center border-b border-[#b5b5b5] bg-linear-to-b from-[#e6e6e6] to-[#d0d0d0] pl-2">
      <div className="flex w-[52px] gap-2">
        <i className="h-3 w-3 shrink-0 rounded-full border border-[#e0443e] bg-[#ff4b47]" />
        <i className="h-3 w-3 shrink-0 rounded-full border border-[#dba010] bg-[#ffb700]" />
        <i className="h-3 w-3 shrink-0 rounded-full border border-[#14b030] bg-[#0cd03c]" />
      </div>
      <div className="flex-1 pt-[2px] pr-[60px] text-center text-[12.500px] text-[#444]">Scope</div>
    </div>
    <div className="flex h-[23px] shrink-0 items-center gap-[18px] border-b border-[#b4b4b4] bg-[#fafafa] pl-[9px] text-[14px] leading-none text-black">
      {["文件", "工具", "视图", "仿真", "帮助"].map((t) => <span key={t}>{t}</span>)}
      <svg className="mr-1 ml-auto" width="7" height="7" viewBox="0 0 7 7"><path d="M0 1q3-1 5 3" fill="none" stroke="#000" strokeWidth="1.500" /><path d="M7 1.500V7H1.500z" /></svg>
    </div>
    <div className="flex h-[27px] shrink-0 items-center border-b border-[#ccc] bg-[#eeeeee] pl-[5px]">
      <GearIcon />
      <SmallCaret className="ml-[9px]" />
      <svg className="ml-[18px] shrink-0" width="17" height="16" viewBox="0 0 17 16"><path d="M9 1v11L1 6.500z" fill="#8dc0e6" stroke="#2b6593" /><path d="M11 1h3v9h-3z" fill="#bfe0f5" stroke="#2b6593" /><circle cx="10.500" cy="10.500" r="4" fill="#ddd" stroke="#444" strokeWidth="1.600" strokeDasharray="1.700 .9" /><circle cx="10.500" cy="10.500" r="2.400" fill="#eee" stroke="#444" /></svg>
      <svg className="ml-[8px] shrink-0" width="17" height="17" viewBox="0 0 17 17"><circle cx="8.500" cy="8.500" r="7.300" fill="#c9ee74" stroke="#50702c" strokeWidth="1.300" /><path d="m6.500 4.500 6 4-6 4z" fill="#12301a" /></svg>
      <svg className="ml-[11px] shrink-0" width="13" height="14" viewBox="0 0 13 14"><path d="M1 1h2.500v12H1zM5.500 1v12l7-6z" fill="#9ccbed" stroke="#2b6593" /></svg>
      <svg className="ml-[11px] shrink-0" width="17" height="16" viewBox="0 0 17 16"><rect x=".5" y=".5" width="16" height="15" rx="6" fill="#a8a8a8" stroke="#8e8e8e" /><path d="M5.500 5h6v6h-6z" fill="#707070" /></svg>
      <svg className="ml-[16px] shrink-0" width="18" height="16" viewBox="0 0 18 16"><path d="M3 1h6v4H3z" fill="#f6a55b" stroke="#d65c11" strokeWidth="1.300" /><path d="M3 10.500h6v4H3z" fill="#f4f4f4" stroke="#555" /><path d="M0 3h3M9 3h3.500v3" fill="none" stroke="#d65c11" /><path d="m12.500 6 2.500 2-2.500 2.500L10 8z" fill="#fff" stroke="#777" /><path d="M15 8h2.500M12.500 10.500v2H9M3 12.500H1V9" fill="none" stroke="#777" /></svg>
      <SmallCaret className="ml-[8px]" />
      <div className="ml-[15px] flex h-5 w-[19px] shrink-0 items-center justify-center rounded-[3px] border border-[#ccc] bg-[#fbfbfb]">
        <svg width="16" height="16" viewBox="0 0 16 16"><circle cx="6.500" cy="6.500" r="5" fill="#fff" stroke="#555" strokeWidth="1.200" /><path d="M4 6.500h5M6.500 4v5" stroke="#111" strokeWidth="1.300" /><path d="m10.500 10.500 4 4" stroke="#333" strokeWidth="2.400" /></svg>
      </div>
      <SmallCaret className="ml-[8px]" />
      <svg className="ml-[17px] shrink-0" width="17" height="17" viewBox="0 0 17 17"><path d="M1 .7h15v15.600H1z" fill="#fff" stroke="#444" /><path d="M8.500 2v4M8.500 11v4M6.500 4l2-2 2 2M6.500 13l2 2 2-2" fill="none" stroke="#333" strokeWidth="1.200" /></svg>
      <SmallCaret className="ml-[8px]" />
      <svg className="ml-[17px] shrink-0" width="15" height="16" viewBox="0 0 15 16"><path d="M1 14.500h5.500v-12H14" fill="none" stroke="#222" strokeWidth="2.400" /><path d="m6.500 5 4.500 5H2z" fill="#555" stroke="#222" /></svg>
      <div className="ml-[9px] flex h-[20px] w-[19px] shrink-0 items-center justify-center rounded-[3px] border border-[#ccc] bg-[#fbfbfb]">
        <svg width="16" height="16" viewBox="0 0 16 16"><path d="M.7.700h14.600v14.600H.7z" fill="#fff" stroke="#555" /><path d="M2 11.500 11 2l3 3-9.500 9.500z" fill="#8fc3e8" stroke="#2a5a80" /><path d="m5 9 1.500 1.500M7.500 6.500 9 8M10 4l1.500 1.500" stroke="#2a5a80" /></svg>
      </div>
      <SmallCaret className="ml-[8px]" />
    </div>
    <div className="h-px shrink-0 bg-[#f8f8f8]" />
    <ScopePlot />
    <div className="flex flex-1 border-t border-white text-[11px] leading-none text-black">
      <div className="flex-1 self-center pt-[5px] pl-px">就绪</div>
      <div className="mt-[3px] mr-[2px] flex w-[51px] items-center justify-center border-t border-l border-[#a8a8a8] pt-[1px]">基于采样</div>
      <div className="mt-[3px] mr-[3px] flex w-[70px] items-center border-t border-l border-r border-[#a8a8a8] border-r-[#ddd] pl-[2px] tracking-[.35px]">T=500.000</div>
    </div>
  </div>
);

/* ---------- library browser behind ---------- */

const LibraryBrowser = () => (
  <div className="absolute top-[23px] left-[868px] flex h-[812px] w-[572px] flex-col overflow-hidden rounded-[5px] bg-[#ededed]">
    <div className="h-[22px] shrink-0 border-b border-[#c8c8c8] bg-[#f6f6f6]" />
    <div className="h-8 shrink-0 border-b border-[#b5b5b5] bg-linear-to-b from-[#ececec] to-[#c4c4c4]" />
    <div className="flex min-h-0 flex-1 pt-[35px] pr-[5px] pb-[5px]">
      <div className="h-full w-[221px] border-r border-b border-[#a5a5a5]" />
      <div className="ml-[6px] flex h-full flex-1 items-end border border-black bg-white pl-[34px]">
        <div className="pb-[1px] text-[12.500px] leading-4 tracking-[.1px] text-[#111]">Waveform<br />Generator</div>
      </div>
    </div>
    <div className="h-[22px] shrink-0 border-t border-[#8a8a8a] bg-linear-to-b from-[#f0f0f0] to-[#d4d4d4]" />
  </div>
);

/* ---------- menu bar ---------- */

const MenuBar = () => (
  <div className="absolute inset-x-0 top-0 flex h-[23px] items-center border-b border-black bg-[linear-gradient(90deg,#69451f_0%,#68462a_14%,#644626_25%,#3c1f20_32%,#2e161d_37%,#563629_43%,#63442b_50%,#66472a_68%,#6c4424_90%,#6c3d1e_100%)] pl-5 text-[14px] leading-none whitespace-nowrap text-white">
    <FaApple size={17} className="-mt-[2px] shrink-0" />
    <span className="ml-[17px] w-[59px] text-[13px] font-bold tracking-[0.45px]">MATLAB</span>
    <span className="ml-[18px] w-7 font-medium">窗口</span>
    <span className="ml-[19px] w-7 font-medium">帮助</span>
    <FaWeixin size={21} className="ml-[683px] shrink-0" />
    <svg className="ml-[10px] shrink-0" width="20" height="14" viewBox="0 0 20 14" fill="none" stroke="#c7ab92">
      <path d="M13 .8a6 6 0 0 1 0 12.400H6A5 5 0 0 1 4.500 3.800 6 6 0 0 1 9 .8z" strokeWidth="1.300" />
      <path d="M9.500 9.800H7a2.600 2.600 0 1 1 1.700-4.600L12.500 9a2.800 2.800 0 1 0-3.500-4" strokeWidth="1.700" />
    </svg>
    <FaBluetoothB size={14} color="#8b6b4e" className="ml-[13px] shrink-0" />
    <svg className="ml-[13px] shrink-0" width="22" height="16" viewBox="0 0 22 16" fill="none" stroke="#fff" strokeWidth="1.900">
      <path d="M1 5.200a14 14 0 0 1 20 0M4.200 8.500a9.500 9.500 0 0 1 13.600 0M7.300 11.500a5.300 5.300 0 0 1 7.400 0" />
      <circle cx="11" cy="14" r="1.100" fill="#fff" stroke="none" />
    </svg>
    <span className="ml-[10px] w-[25px] text-[11.500px] font-medium tracking-[-.2px]">25%</span>
    <svg className="ml-[4px] shrink-0" width="24" height="13" viewBox="0 0 24 13" fill="none" stroke="#fff" strokeWidth="1.200">
      <path d="M7 1H2.500Q1 1 1 2.500v8Q1 12 2.500 12H6M14 1h4.500Q20 1 20 2.500v8q0 1.500-1.500 1.500H13" />
      <path d="M22.500 4.500v4" strokeWidth="1.600" />
      <path d="M12 .500 5.500 7.500H10L8.500 12.500 15 5.500h-4.500z" fill="#fff" stroke="none" />
    </svg>
    <span className="ml-[14px] flex h-4 w-4 items-center justify-center rounded-[2px] bg-white text-[12px] text-[#5b3d24]">A</span>
    <span className="ml-[5px] w-6 text-[11px] font-medium tracking-[-.2px]">ABC</span>
    <span className="ml-[19px] w-[174px] text-[14px] font-medium tracking-[0.34px]">12月5日 周六 下午8:46:01</span>
    <Search size={16} className="ml-[21px] shrink-0" />
    <span className="ml-[17px] h-4 w-4 shrink-0 rounded-full border border-[#ddd] bg-[conic-gradient(#f5b8d8,#ef6aa8,#f8c0d8,#3b88e2,#4a2a8a,#39c0c8,#a8ece8,#ef5b9f,#f5b8d8)] p-[4px]"><i className="block h-full w-full rounded-full bg-white/70" /></span>
    <svg className="ml-[12px] shrink-0" width="18" height="11" viewBox="0 0 18 11" fill="none" stroke="#fff" strokeWidth="2"><path d="M0 1h2M4 1h12M0 5.500h2M4 5.500h14M0 10h2M4 10h13" /></svg>
  </div>
);

/* ---------- dock ---------- */

const D = ({ children, dot }: Kids & { dot?: boolean }) => (
  <div className="relative flex h-[62px] w-[52px] shrink-0 flex-col items-center pt-[4px]">
    <div className="flex h-12 w-12 items-center justify-center">{children}</div>
    {dot && <i className="mt-[4px] h-1 w-1 rounded-full bg-[#b3a6ab]" />}
  </div>
);

const V = ({ children }: Kids) => <svg width="48" height="48" viewBox="0 0 48 48" className="shrink-0">{children}</svg>;

const MatlabIcon = () => (
  <V>
    <defs>
      <linearGradient id="mtl" x1="0" y1="0" x2="1" y2="0">
        <stop offset="0" stopColor="#7a1306" /><stop offset=".32" stopColor="#e2611b" /><stop offset=".5" stopColor="#ffb52c" /><stop offset=".68" stopColor="#e7501a" /><stop offset="1" stopColor="#b31a0c" />
      </linearGradient>
      <linearGradient id="mtb" x1="0" y1="0" x2="1" y2="0"><stop offset="0" stopColor="#58aee0" /><stop offset="1" stopColor="#26508c" /></linearGradient>
    </defs>
    <path d="m1 26 14-7c4-2 7-7 10-12l-9 24-5 3z" fill="url(#mtb)" />
    <path d="M16 31C22 24 26 3 32 2c5 3 9 22 15 35-5-2-10-5-14 0-4 4-7 8-12 8 0-6-2-10-5-14z" fill="url(#mtl)" />
  </V>
);

const petals: [string, number][] = [["#f8981d", 0], ["#f3dc1c", 45], ["#a6cf3a", 90], ["#46b585", 135], ["#4d92d8", 180], ["#8d74c6", 225], ["#d9598f", 270], ["#ee4b35", 315]];

const Dock = () => (
  <div className="absolute top-[837px] left-[42px] flex h-[63px] w-[1356px] rounded-t-[5px] border border-b-0 border-[#4a3b41] bg-[linear-gradient(90deg,#211118_0%,#25151b_20%,#42343a_28%,#33242a_42%,#22141a_60%,#24131b_80%,#1c0c14_100%)] pl-[3px]">
    <D dot>
      <V>
        <defs>
          <linearGradient id="fnd" x1="0" y1="0" x2="0" y2="1"><stop offset="0" stopColor="#17c8fb" /><stop offset="1" stopColor="#1b68ee" /></linearGradient>
        </defs>
        <path d="M4.500 5.500h39v37h-39z" fill="#e9eff5" />
        <path d="M4.500 5.500h21c-4 6-5 13-5 21h7q0 8 2 16h-25z" fill="url(#fnd)" />
        <path d="M14.500 16v4M33.500 16v4M11.500 30q12 9 25 0" stroke="#132d4e" strokeWidth="1.600" fill="none" strokeLinecap="round" />
      </V>
    </D>
    <D>
      <V>
        <defs><linearGradient id="lp" x1="0" y1="0" x2="0" y2="1"><stop offset="0" stopColor="#c9e4e8" /><stop offset=".5" stopColor="#a9b2b5" /><stop offset="1" stopColor="#727375" /></linearGradient></defs>
        <circle cx="24" cy="24" r="20.500" fill="url(#lp)" stroke="#dfe3e5" strokeWidth="1.300" />
        <path d="M37 11c-9 0-15 3-19 9l-6 2-3 6 7-1 6 6 0 7 5-3 1-6c6-4 9-10 9-20zM14 31q-4 2-4 8 5-1 8-4z" fill="#45494c" />
        <circle cx="29" cy="19.500" r="3" fill="#bcc6ca" />
      </V>
    </D>
    <D>
      <V>
        <circle cx="24" cy="24" r="21" fill="#f7f5f3" />
        {petals.map(([c, a]) => <rect key={a} x="18.500" y="6" width="11" height="17" rx="5.500" fill={c} opacity=".9" transform={`rotate(${a} 24 24)`} className="mix-blend-multiply" />)}
      </V>
    </D>
    <D>
      <V>
        <defs><radialGradient id="qt"><stop offset="0" stopColor="#18d3fd" /><stop offset="1" stopColor="#2347e8" /></radialGradient></defs>
        <circle cx="24" cy="24" r="21" fill="#59606a" />
        <circle cx="24" cy="24" r="17.500" fill="#343a43" />
        <circle cx="24" cy="24" r="13.500" fill="url(#qt)" />
        <path d="m26 26 8 8" stroke="#434a54" strokeWidth="8" strokeLinecap="round" />
        <path d="m29 35 6-6 11 10v5H37z" fill="#434a54" />
      </V>
    </D>
    <D>
      <V>
        <defs><linearGradient id="gr" x1="0" y1="0" x2=".5" y2="1"><stop offset="0" stopColor="#69e332" /><stop offset=".25" stopColor="#e6ea23" /><stop offset=".5" stopColor="#fb3a20" /><stop offset=".75" stopColor="#f8129c" /><stop offset="1" stopColor="#c21cf8" /></linearGradient></defs>
        <path d="m24 2 22 9v21L24 46 2 32V11z" fill="#dbe1e3" />
        <path d="M24 2v24M2 31l22-6 22 6M2 18l22-8 22 8M2 24l22-7 22 7M9 8v27M16 5v34M32 5v34M39 8v26" stroke="#8ecbd6" fill="none" strokeWidth=".7" />
        <path d="m8 10 13-5c12 1 9 21 20 25l-15 10C13 37 19 12 8 10z" fill="url(#gr)" />
      </V>
    </D>
    <D dot>
      <V>
        <path d="M4 27h40l1 17H3z" fill="#f2f2f2" />
        <rect x="9" y="24" width="7.500" height="16" rx="1" fill="#ee3b58" /><rect x="17.500" y="16" width="7" height="24" rx="1" fill="#fb9a14" /><rect x="25.500" y="5" width="8" height="35" rx="1" fill="#16c75d" /><rect x="34.500" y="12" width="7" height="28" rx="1" fill="#248bf0" />
      </V>
    </D>
    <D dot>
      <V>
        <path d="m5 7 33-4 5 36-33 6z" fill="#f8f8f8" />
        <path d="m5 7 33-4 1 6-33 4z" fill="#f99316" />
        <text x="8" y="12" fontSize="5" fill="#fff" transform="rotate(-6 8 12)">PAGES</text>
        <path d="m10 17 14-2 1 11-14 1z" fill="#3586c8" /><path d="m13 19 8-2 1 4-5 5z" fill="#ef7d23" />
        <path d="m27 17 8-1M27 21l9-1M28 25l8-1M12 31l22-3M13 35l21-3M13 39l16-2" stroke="#aaa" />
        <path d="m38 2 4 1-9 33-4 7 0-8z" fill="#f08c1e" stroke="#8b5213" strokeWidth=".6" /><path d="m30 33 4 1-5 10z" fill="#444" />
      </V>
    </D>
    <D>
      <V>
        <path d="M9 4h30l4 14H5z" fill="#23a6ef" /><path d="M5 18h38v3H5z" fill="#0f7ec9" />
        <path d="M12 6h24l1 10H11z" fill="#f3f6f9" /><circle cx="19" cy="12" r="3.500" fill="#2bb6c9" /><path d="M19 12V8a4 4 0 0 1 4 4z" fill="#ee3e82" /><path d="M26 9h8M26 11h8M26 13h8" stroke="#c2c8cc" />
        <path d="M23 21h2v21h-2z" fill="#c2d9e5" /><ellipse cx="24" cy="43" rx="9" ry="3" fill="#d5e7f0" />
      </V>
    </D>
    <D>
      <V>
        <defs><linearGradient id="as" x1="0" y1="0" x2="0" y2="1"><stop offset="0" stopColor="#1dbdfb" /><stop offset="1" stopColor="#1d62ed" /></linearGradient></defs>
        <circle cx="24" cy="24" r="20" fill="url(#as)" stroke="#f4f8fb" strokeWidth="1.800" />
        <path d="M26 12 14.500 33M22 12l11.500 21M11 28.500h16M31 28.500h6" stroke="#fff" strokeWidth="3.200" strokeLinecap="round" />
      </V>
    </D>
    <D>
      <V>
        <defs><linearGradient id="sp" x1="0" y1="0" x2="0" y2="1"><stop offset="0" stopColor="#b7c6c8" /><stop offset="1" stopColor="#738087" /></linearGradient></defs>
        <path d="M4 5h40v39H4z" fill="url(#sp)" />
        <circle cx="24" cy="24" r="17.500" fill="#30343a" />
        <circle cx="24" cy="24" r="15" fill="none" stroke="#a6a9ab" strokeWidth="2.500" strokeDasharray="1.600 1.200" />
        <circle cx="24" cy="24" r="12" fill="none" stroke="#a0a3a5" strokeWidth="3" />
        <path d="M24 24h12M24 24l-7-10M24 24l-7 10" stroke="#a0a3a5" strokeWidth="3" /><circle cx="24" cy="24" r="3" fill="#303236" />
      </V>
      <span className="absolute top-[4px] right-px flex h-[17px] w-[17px] items-center justify-center rounded-full bg-[#f5181f] text-[11px] text-white">2</span>
    </D>
    <D>
      <V>
        <ellipse cx="16.500" cy="43.500" rx="8" ry="2.500" fill="#f6a30a" /><ellipse cx="31.500" cy="43.500" rx="8" ry="2.500" fill="#f6a30a" />
        <ellipse cx="24" cy="29" rx="15" ry="15" fill="#0a0a0a" /><path d="M10 22Q4 30 7 37q5-3 6-9zM38 22q6 8 3 15-5-3-6-9z" fill="#0a0a0a" />
        <ellipse cx="24" cy="33.500" rx="12" ry="9.500" fill="#fff" />
        <path d="M11 20C8-4 40-4 37 20z" fill="#0a0a0a" />
        <path d="M10 20q14 6 28 0l1 6q-15 6-30 0z" fill="#e51a20" /><path d="M15 25h6v8h-5z" fill="#d61218" />
        <ellipse cx="20.500" cy="11" rx="2.600" ry="4" fill="#fff" /><ellipse cx="27.500" cy="11" rx="2.600" ry="4" fill="#fff" /><circle cx="21.200" cy="11" r="1.300" /><circle cx="26.800" cy="11" r="1.300" />
        <ellipse cx="24" cy="18" rx="8" ry="2.300" fill="#f9a80c" />
      </V>
    </D>
    <D dot>
      <V>
        <path d="M18 7c9 0 15 6 15 12S27 32 18 32q-3 0-6-1l-5 3 1-5q-5-4-5-10C3 13 9 7 18 7z" fill="#0adf70" />
        <circle cx="12.500" cy="16" r="2" fill="#0a7544" /><circle cx="23.500" cy="16" r="2" fill="#0a7544" />
        <path d="M33 20c7 0 12 5 12 11q0 5-3 7l1 4-5-2q-2 1-5 1c-8 0-13-4-13-10s5-11 13-11z" fill="#eee" />
        <circle cx="29" cy="27" r="1.700" fill="#777" /><circle cx="37.500" cy="27" r="1.700" fill="#777" />
      </V>
    </D>
    <D>
      <div className="flex h-[42px] w-[42px] items-center justify-center rounded-full rounded-bl-[3px] border-[2.500px] border-[#f2f2f2] bg-[#1fd05c]">
        <svg width="24" height="24" viewBox="0 0 24 24" className="shrink-0">
          <path d="M7 3.500q1.200-.8 2 .3l1.800 3.400q.5 1-.3 1.900L9.300 10.500q1.700 3 4.700 4.600l1.500-1.500q.8-.7 1.700-.2l3.200 1.700q1.100.7.6 1.900-1.300 3.600-4.800 3.600C10.500 20.300 3.700 14 3.600 8.100 3.600 6 5 4.500 7 3.500z" fill="#fff" />
        </svg>
      </div>
    </D>
    <D>
      <V>
        <defs>
          <linearGradient id="stm" x1="0" y1="0" x2="0" y2="1"><stop offset="0" stopColor="#131d45" /><stop offset="1" stopColor="#1683bf" /></linearGradient>
          <clipPath id="stc"><circle cx="24" cy="24" r="21" /></clipPath>
        </defs>
        <circle cx="24" cy="24" r="21" fill="url(#stm)" />
        <g clipPath="url(#stc)">
          <path d="M0 26 18 33" stroke="#eef3f7" strokeWidth="9" />
          <path d="m17 32 5-9 8-9 8 7-10 8-8 5z" fill="#e3e9ef" />
          <circle cx="18" cy="32" r="6" fill="#eef3f7" /><path d="m10 32 8 3a3.600 3.600 0 0 0 1-6l-4-1" fill="none" stroke="#165b8c" strokeWidth="1.500" />
          <circle cx="32" cy="18" r="7.800" fill="#eef3f7" /><circle cx="32" cy="18" r="5" fill="#c8d4de" stroke="#26466c" strokeWidth="1.700" />
        </g>
      </V>
    </D>
    <D>
      <V>
        <circle cx="24" cy="24" r="20" fill="#1d9cf2" stroke="#e8eef2" strokeWidth="2" />
        <circle cx="24" cy="24" r="16.500" fill="none" stroke="#bce2fb" strokeWidth="2.500" strokeDasharray=".7 1.890" />
        <path d="m36 11-9 16-6-6z" fill="#ef3030" /><path d="m12 37 9-16 6 6z" fill="#eef3f7" />
      </V>
    </D>
    <D dot>
      <V>
        <rect x="5" y="5" width="38" height="38" rx="8" fill="#fdfdfd" />
        <circle cx="24" cy="24" r="16" fill="#35a853" />
        <path d="M24 24 10.100 16A16 16 0 0 1 37.900 16z" fill="#d93a2c" /><path d="M24 24 37.900 16A16 16 0 0 1 24 40z" fill="#fbc926" /><path d="M24 16h13.900A16 16 0 0 0 10.100 16l7 11z" fill="#d93a2c" />
        <circle cx="24" cy="24" r="7.500" fill="#fff" /><circle cx="24" cy="24" r="6" fill="#4080ee" />
      </V>
    </D>
    <D>
      <V>
        <defs><linearGradient id="atm" x1="0" y1="0" x2="0" y2="1"><stop offset="0" stopColor="#63d496" /><stop offset="1" stopColor="#14ab74" /></linearGradient></defs>
        <circle cx="24" cy="24" r="20" fill="url(#atm)" stroke="#e3f4eb" strokeWidth="1.600" />
        <g fill="none" stroke="#eafaf1" strokeWidth="1.300">
          <ellipse cx="24" cy="24" rx="12.500" ry="5" transform="rotate(15 24 24)" /><ellipse cx="24" cy="24" rx="12.500" ry="5" transform="rotate(75 24 24)" /><ellipse cx="24" cy="24" rx="12.500" ry="5" transform="rotate(135 24 24)" />
        </g>
        <circle cx="24" cy="24" r="2" fill="#fff" />
      </V>
    </D>
    <D>
      <div className="flex h-[36px] w-[41px] items-start rounded-[3px] border-[1.500px] border-[#88898b] bg-[#25282b] pt-[3px] pl-1 font-['Liberation_Mono',monospace] text-[11px] font-bold text-[#f2f2f2]">&gt;_</div>
    </D>
    <D>
      <V>
        <defs><linearGradient id="pc" x1="0" y1="0" x2="1" y2="1"><stop offset="0" stopColor="#20d487" /><stop offset=".45" stopColor="#38d6c0" /><stop offset=".6" stopColor="#f8ec38" /><stop offset="1" stopColor="#dff547" /></linearGradient></defs>
        <path d="M7 7h34v34H7z" fill="url(#pc)" /><path d="M11 11h26v26H11z" fill="#050505" />
        <text x="12" y="26" fontSize="17" fontWeight="bold" fill="#fff" textLength="24" lengthAdjust="spacingAndGlyphs">PC</text><path d="M13 32h10" stroke="#fff" strokeWidth="2" />
      </V>
    </D>
    <D dot><MatlabIcon /></D>
    <D>
      <V>
        <path d="M0 0h48v48H0z" fill="#fff" /><path d="M1 1h46v46H1z" fill="#fbdcbf" /><path d="M1 36Q25 24 47 29v18H1z" fill="#fef2e6" />
        <path d="M15 7q5-3 20-2v6H25v8h9v6H25v8l-4 5h-6z" fill="#e2811e" /><path d="M15 7q5-2 10 4v22l-4 5h-6z" fill="#bd620f" /><path d="M20 8q7 0 15 0v3H25z" fill="#f5a748" />
        <text x="25" y="44" fontSize="8" fill="#dc7c20" textLength="15">360</text>
      </V>
    </D>
    <div className="flex w-6 justify-center pt-[15px]"><i className="h-8 w-px bg-[#604f56]" /></div>
    <D dot>
      <V>
        <path d="m6 6 30-4 5 37-30 5z" fill="#a4343b" /><path d="m11 44 30-5 0 2-29 5z" fill="#e2d1b4" /><path d="m7 11 29-4" stroke="#7c1f27" />
        <text x="13" y="9" fontSize="4.500" fill="#f2c9c9" fontFamily="'Liberation Serif', serif" transform="rotate(-8 13 9)">Dictionary</text>
        <text x="14" y="30" fontSize="17" fill="#f9eeee" fontFamily="'Liberation Serif', serif" transform="rotate(-7 14 30)">Aa</text>
      </V>
    </D>
    <D>
      <V>
        <path d="M4 39 36 2l6 5L11 43l-8 2z" fill="#f5b128" stroke="#8c5405" strokeWidth=".8" /><path d="m3 45 1.500-6 5 4z" fill="#222" />
        <g fill="#16b72a" stroke="#078017" strokeWidth=".7">
          <circle cx="9" cy="21" r="4.500" /><path d="M7 25q3 4 9 2l5 4 4 13h-5l-3-8-2 8H9l4-12q-5-2-6-7z" />
          <circle cx="24" cy="12" r="3" /><circle cx="32" cy="17" r="4.500" />
          <path d="m30 21 6-8 1-9 4 1-1 14 7 25h-6l-5-15-1 15h-7z" />
        </g>
      </V>
    </D>
    <D dot><MatlabIcon /></D>
    <div className="flex w-6 justify-center pt-[7px]"><i className="h-12 w-px bg-[#604f56]" /></div>
    <D>
      <V>
        <defs><linearGradient id="tr" x1="0" y1="0" x2="1" y2="0"><stop offset="0" stopColor="#444a4b" /><stop offset=".4" stopColor="#7d8586" /><stop offset="1" stopColor="#3a3f41" /></linearGradient></defs>
        <path d="M7 8h32l-4 34q-11 5-23 0z" fill="url(#tr)" opacity=".9" />
        <path d="m9 9 3-7 6 3 4-3 6 3 5-3 5 7q-16 5-29 0z" fill="#e8eaec" stroke="#888" strokeWidth=".6" /><path d="m18 5 5 3M27 6l5-2" stroke="#4474b5" strokeWidth="1.500" />
        <ellipse cx="23" cy="9" rx="16" ry="3" fill="none" stroke="#a9afb1" />
      </V>
    </D>
  </div>
);

/* ---------- desktop ---------- */

export default function App() {
  return (
    <div className="relative h-[900px] w-[1440px] overflow-hidden bg-[#0e0409] font-['Inter','Noto_Sans_CJK_SC',sans-serif]">
      <MenuBar />
      <LibraryBrowser />
      <SimWindow
        title="untitled *"
        last="MULTIPLE"
        quick="ml-[22px]"
        compact
        offset="pr-[60px]"
        place="left-0 top-[23px] h-[812px] w-[868px]"
        statusH="h-[26px]"
        status={<span className="pl-[6px]">Ready</span>}
      />
      <DiagnosticViewer />
      <SimWindow
        title="PIDcontrol/Vibration *"
        last="BLOCK"
        quick="ml-[138px]"
        offset="pr-[60px]"
        place="left-[58px] top-[82px] h-[753px] w-[994px] shadow-[0_0_1px_rgba(0,0,0,.6),0_6px_20px_rgba(0,0,0,.4)]"
        statusH="h-[25px]"
        status={
          <>
            <span className="w-[493px] pl-[6px]">Ready</span>
            <span className="w-[230px] text-[#15158a]">View 7 warnings</span>
            <span>80%</span>
            <span className="mr-4 ml-auto tracking-[.2px] text-[#15158a]">auto(ode15s)</span>
          </>
        }
      >
        <div className="mb-[2px] flex w-[882px] flex-col border-r border-b border-l border-[#a0a0a0] bg-white">
          <div className="flex h-[30px] shrink-0 items-center border-b border-[#8c8c8c] pt-px pl-[2px] text-[12.500px] text-[#1a1a1a] shadow-[inset_0_-1px_#e6e6e6,inset_0_2px_#ececec]">
            <BlockChip color />
            <span className="ml-[2px] w-[64px] tracking-[.15px]">PIDcontrol</span>
            <svg className="ml-[6px]" width="5" height="10" viewBox="0 0 5 10"><path d="M0 0l5 5-5 5z" /></svg>
            <span className="ml-[6px]"><BlockChip /></span>
            <span className="ml-[2px] tracking-[.15px]">Vibration</span>
            <Caret className="mr-[5px] ml-auto" />
          </div>
          <Diagram />
        </div>
      </SimWindow>
      <Scope />
      <Dock />
    </div>
  );
}
